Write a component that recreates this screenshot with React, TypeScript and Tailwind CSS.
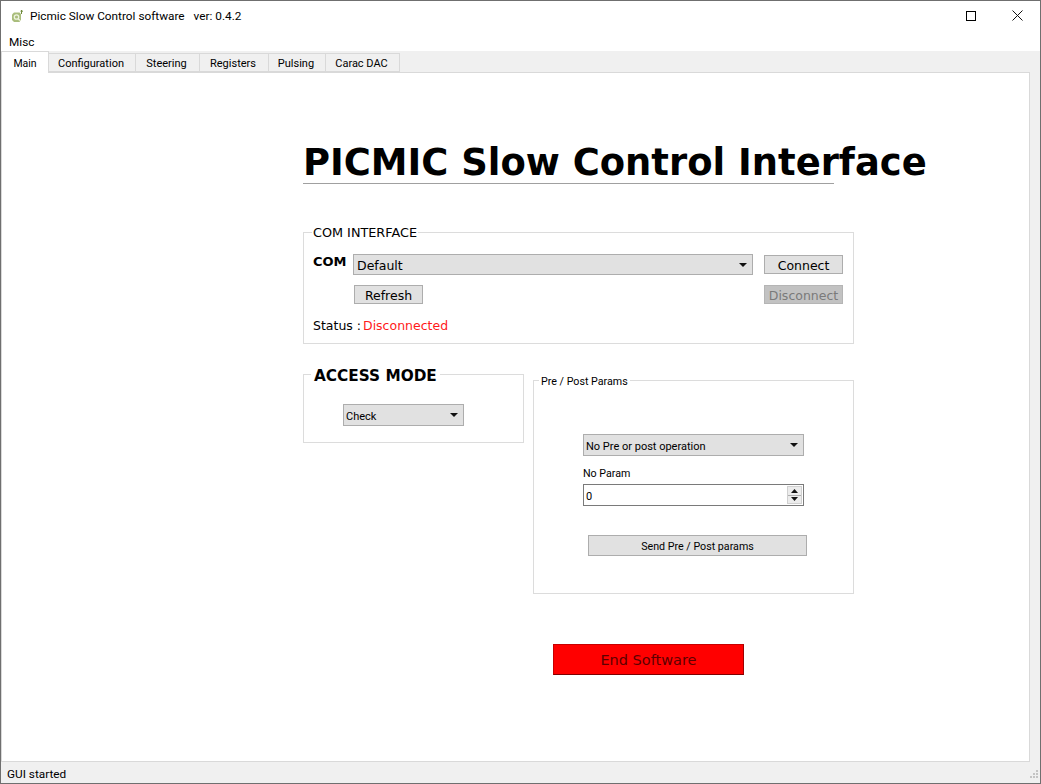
import React from "react";

const ui = "font-['Roboto',sans-serif]";
const vd = "font-['DejaVu_Sans',sans-serif]";

function Arrow({ className = "" }: { className?: string }) {
  return (
    <svg width="8" height="4" viewBox="0 0 8 4" className={className}>
      <path d="M0 0H8L4 4Z" fill="#111" />
    </svg>
  );
}

function Combo({ label, className, textClass }: { label: string; className: string; textClass: string }) {
  return (
    <div className={`flex items-center justify-between border border-[#adadad] bg-[#e1e1e1] pl-[2px] pr-[5px] text-black ${textClass} ${className}`}>
      <span className="pt-[4px]">{label}</span>
      <Arrow />
    </div>
  );
}

function Tab({ label, w }: { label: string; w: string }) {
  return (
    <div className={`flex h-[19px] items-center justify-center border border-l-0 border-[#d9d9d9] bg-[#f0f0f0] pr-[2px] pt-[3px] text-[11px] text-black ${w}`}>
      {label}
    </div>
  );
}

export default function App() {
  return (
    <div className={`flex h-[784px] w-[1041px] flex-col overflow-hidden border border-[#6f6f6f] bg-white ${ui}`}>
      <div className="flex h-[29px] shrink-0 items-center bg-white pl-[10px]">
        <svg width="13" height="14" viewBox="0 0 13 14" className="mr-[6px]">
          <path d="M3 3.5H8.5L10 5V10.5L8.5 13H3L1 11V5.5Z" fill="#a9bd7c" />
          <circle cx="5.5" cy="8" r="2.2" fill="none" stroke="#eef3e0" strokeWidth="1.3" />
          <path d="M7 9.5L8.8 11.5" stroke="#eef3e0" strokeWidth="1.2" />
          <path d="M10.5 1V5M9.5 2.2H12" stroke="#6f8a3c" strokeWidth="1" />
        </svg>
        <span className="pt-[2px] text-[11.8px] text-black">Picmic Slow Control software</span>
        <span className="ml-[9px] pt-[2px] text-[11.8px] text-black">ver: 0.4.2</span>
        <div className="ml-auto flex items-center">
          <span className="flex h-[29px] w-[46px] items-center justify-center">
            <span className="block h-[10px] w-[10px] border border-black" />
          </span>
          <span className="flex h-[29px] w-[46px] items-center justify-center">
            <svg width="11" height="11" viewBox="0 0 11 11">
              <path d="M.5.5L10.5 10.5M10.5.5L.5 10.5" stroke="#111" strokeWidth="1" />
            </svg>
          </span>
        </div>
      </div>

      <div className="flex h-[21px] shrink-0 items-center bg-white pl-[8px] pt-[4px] text-[11.8px] text-black">Misc</div>

      <div className="flex min-h-0 flex-1 flex-col bg-[#f0f0f0]">
        <div className="flex h-[21px] shrink-0 items-end">
          <div className="relative z-10 -mb-px flex h-[22px] w-[48px] items-center justify-center border border-b-0 border-[#d9d9d9] bg-white pt-[2px] text-[10.5px] text-black">
            Main
          </div>
          <Tab label="Configuration" w="w-[87px]" />
          <Tab label="Steering" w="w-[64px]" />
          <Tab label="Registers" w="w-[69px]" />
          <Tab label="Pulsing" w="w-[57px]" />
          <Tab label="Carac DAC" w="w-[74px]" />
        </div>

        <div className={`mr-[10px] h-[690px] shrink-0 border border-[#d9d9d9] bg-white pl-[301px] pt-[66px] ${vd}`}>
          <div className="w-[531px] border-b border-[#a0a0a0]">
            <div className="h-[44px] whitespace-nowrap pt-[2px] text-[36.9px] font-bold leading-[44px] text-black">
              PICMIC Slow Control Interface
            </div>
          </div>

          <div className="relative mt-[48px] h-[112px] w-[551px] border border-[#dcdcdc] px-[9px] pt-[21px]">
            <span className="absolute left-[8px] top-[-8px] bg-white px-px text-[12.8px] leading-[15px] text-black">COM INTERFACE</span>
            <div className="flex items-start">
              <span className="w-[40px] text-[13px] font-bold leading-[16px] text-black">COM</span>
              <Combo label="Default" className="h-[21px] w-[400px] pl-[3px]" textClass="text-[12.5px]" />
              <button className="ml-[11px] mt-px h-[19px] w-[79px] border border-[#adadad] bg-[#e1e1e1] pt-[4px] text-[12.5px] leading-none text-black">Connect</button>
            </div>
            <div className="mt-[10px] flex items-center pl-[41px]">
              <button className="h-[19px] w-[69px] border border-[#adadad] bg-[#e1e1e1] pt-[4px] text-[12.5px] leading-none text-black">Refresh</button>
              <button className="ml-[341px] h-[19px] w-[79px] border border-[#b5b5b5] bg-[#c2c2c2] pt-[4px] text-[12.5px] leading-none text-[#7a7a7a]">Disconnect</button>
            </div>
            <div className="mt-[14px] text-[12.5px] leading-[16px] text-black">
              Status : <span className="-ml-[2px] text-[#ff1a1a]">Disconnected</span>
            </div>
          </div>

          <div className="mt-[30px] flex items-start">
            <div className="relative h-[69px] w-[221px] border border-[#dcdcdc] pl-[39px] pt-[29px]">
              <span className="absolute left-[7px] top-[-8px] bg-white px-[3px] text-[15.3px] font-bold leading-[18px] text-black">ACCESS MODE</span>
              <Combo label="Check" className={`h-[22px] w-[121px] ${ui}`} textClass="text-[11px]" />
            </div>

            <div className={`relative ml-[9px] mt-[6px] h-[214px] w-[321px] border border-[#dcdcdc] pl-[49px] pt-[53px] ${ui}`}>
              <span className="absolute left-[5px] top-[-6px] bg-white px-[2px] text-[10.7px] leading-[14px] text-black">Pre / Post Params</span>
              <Combo label="No Pre or post operation" className="h-[22px] w-[221px]" textClass="text-[11px]" />
              <div className="mt-[10px] h-[16px] text-[10.7px] leading-[16px] text-black">No Param</div>
              <div className="mt-[2px] flex h-[22px] w-[221px] items-center justify-between border border-[#7a7a7a] bg-white pl-[2px] pr-[1px] text-[11px] text-black">
                <span className="pt-[4px]">0</span>
                <div className="flex h-[18px] w-[15px] flex-col border border-[#d0d0d0] bg-[#ececec]">
                  <div className="flex flex-1 items-center justify-center border-b border-[#adadad]">
                    <svg width="7" height="4" viewBox="0 0 7 4"><path d="M3.5 0L7 4H0Z" fill="#111" /></svg>
                  </div>
                  <div className="flex flex-1 items-center justify-center">
                    <svg width="7" height="4" viewBox="0 0 7 4"><path d="M0 0H7L3.5 4Z" fill="#111" /></svg>
                  </div>
                </div>
              </div>
              <button className="ml-[5px] mt-[29px] block h-[21px] w-[219px] border border-[#adadad] bg-[#e1e1e1] pt-[4px] text-[10.7px] leading-none text-black">Send Pre / Post params</button>
            </div>
          </div>

          <button className="ml-[250px] mt-[50px] block h-[31px] w-[191px] border border-[#c80000] border-b-[#800000] border-r-[#a00000] bg-[#ff0000] pt-[2px] text-[14.5px] leading-none text-[#5c0000]">
            End Software
          </button>
        </div>

        <div className="relative flex h-[21px] shrink-0 items-center bg-[#f0f0f0] pl-[6px] pt-[4px] text-[11.8px] text-black">
          GUI started
          <svg width="10" height="10" viewBox="0 0 10 10" className="absolute bottom-[3px] right-[1px]">
            <path d="M7 0h2v2H7zM4 3h2v2H4zM7 3h2v2H7zM1 6h2v2H1zM4 6h2v2H4zM7 6h2v2H7z" fill="#c4c4c4" />
          </svg>
        </div>
      </div>
    </div>
  );
}
